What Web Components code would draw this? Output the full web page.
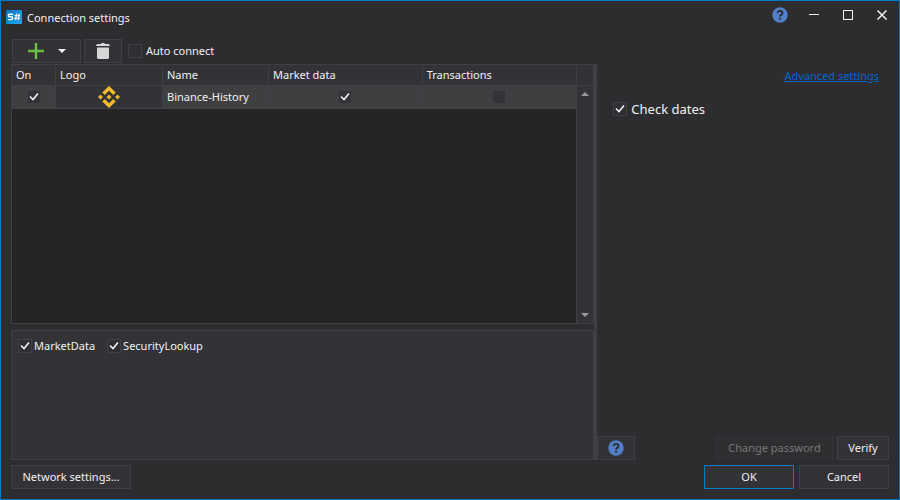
<!DOCTYPE html>
<html lang="en">
<head>
<meta charset="utf-8">
<title>Connection settings</title>
<style>
  :root {
    --bg: #2d2d30;
    --panel: #333337;
    --line: #3f3f46;
    --row: #3f3f41;
    --dark: #252526;
    --accent: #007acc;
    --text: #f1f1f1;
  }
  body {
    margin: 0;
    background: var(--bg);
    color: var(--text);
    font: 11px/16px "Noto Sans", "Open Sans", sans-serif;
  }
</style>
</head>
<body>
<settings-window>
  <title-bar slot="title">Connection settings</title-bar>

  <tool-bar slot="toolbar">
    <ui-button class="add" label="Add connection"><add-icon></add-icon></ui-button>
    <ui-button class="remove" label="Remove connection"><trash-icon></trash-icon></ui-button>
    <check-box large>Auto connect</check-box>
  </tool-bar>

  <connection-table slot="table"></connection-table>

  <message-types slot="messages">
    <check-box checked>MarketData</check-box>
    <check-box checked>SecurityLookup</check-box>
  </message-types>

  <adapter-settings slot="settings">
    <check-box checked large>Check dates</check-box>
  </adapter-settings>

  <dialog-footer slot="footer"></dialog-footer>
</settings-window>

<script>
class SettingsWindow extends HTMLElement {
  constructor() {
    super();
    this.attachShadow({ mode: 'open' }).innerHTML = `
      <style>
        :host {
          box-sizing: border-box;
          display: flex;
          flex-direction: column;
          min-height: 100vh;
          border: 1px solid var(--accent);
        }
        main {
          flex: 1;
          display: grid;
          grid-template-columns: 2fr 3px 1fr;
          grid-template-rows: 25px 1fr;
          padding: 0 10px;
        }
        .left {
          grid-row: 2;
          display: grid;
          grid-template-rows: 2fr 1fr;
          gap: 6px;
        }
        .splitter {
          grid-row: 2;
          background: var(--line);
        }
        .right {
          grid-column: 3;
          grid-row: 1 / 3;
          display: flex;
        }
      </style>
      <slot name="title"></slot>
      <main>
        <slot name="toolbar"></slot>
        <div class="left">
          <slot name="table"></slot>
          <slot name="messages"></slot>
        </div>
        <div class="splitter"></div>
        <div class="right"><slot name="settings"></slot></div>
      </main>
      <slot name="footer"></slot>
    `;
  }
}

class TitleBar extends HTMLElement {
  constructor() {
    super();
    this.attachShadow({ mode: 'open' }).innerHTML = `
      <style>
        :host {
          display: flex;
          align-items: flex-start;
          height: 38px;
          box-sizing: border-box;
          padding-left: 5px;
        }
        .logo { margin: 9px 5px 0 0; }
        h1 {
          flex: 1;
          margin: 0;
          padding-top: 9px;
          font: inherit;
        }
        nav { display: flex; }
        button {
          width: 34px;
          height: 28px;
          padding: 0;
          border: 0;
          background: none;
          color: var(--text);
          display: grid;
          place-items: center;
        }
      </style>
      <svg class="logo" width="16" height="14" viewBox="0 0 16 14">
        <defs>
          <linearGradient id="g" x1="0" y1="0" x2="1" y2="1">
            <stop offset="0" stop-color="#0c6fc4"/>
            <stop offset="1" stop-color="#12b2ea"/>
          </linearGradient>
        </defs>
        <rect width="16" height="14" rx="1" fill="url(#g)"/>
        <g fill="none" stroke="#fff" stroke-width="1.4">
          <path d="M7 4.2H3.4Q2.4 4.2 2.4 5.4T3.4 6.8H5.6Q6.6 6.8 6.6 8T5.6 9.6H2"/>
          <path d="M10.6 3.6L9.6 10M13.2 3.6L12.2 10M8.4 5.6H14.2M8 8.2H13.8" stroke-width="1.1"/>
        </g>
      </svg>
      <h1><slot></slot></h1>
      <nav>
        <button aria-label="Help"><help-icon></help-icon></button>
        <button aria-label="Minimize">
          <svg width="12" height="12"><path d="M1 5.5H11" stroke="currentColor"/></svg>
        </button>
        <button aria-label="Maximize">
          <svg width="12" height="12"><rect x="1.5" y="1.5" width="9" height="9" fill="none" stroke="currentColor"/></svg>
        </button>
        <button aria-label="Close">
          <svg width="12" height="12"><path d="M1.5 1.5L10.5 10.5M10.5 1.5L1.5 10.5" stroke="currentColor" stroke-width="1.5"/></svg>
        </button>
      </nav>
    `;
  }
}

class ToolBar extends HTMLElement {
  constructor() {
    super();
    this.attachShadow({ mode: 'open' }).innerHTML = `
      <style>
        :host {
          display: flex;
          align-items: stretch;
          padding: 0 0 1px 1px;
        }
        ::slotted(.add) { width: 69px; margin-right: 3px; }
        ::slotted(.remove) { width: 38px; margin-right: 6px; }
      </style>
      <slot></slot>
    `;
  }
}

class UiButton extends HTMLElement {
  constructor() {
    super();
    this.attachShadow({ mode: 'open' });
  }

  connectedCallback() {
    const label = this.getAttribute('label');
    const disabled = this.hasAttribute('disabled');
    this.shadowRoot.innerHTML = `
      <style>
        :host { display: flex; height: 24px; }
        button {
          flex: 1;
          display: flex;
          align-items: center;
          justify-content: center;
          padding: 0 10px;
          border: 1px solid var(--line);
          background: var(--panel);
          color: inherit;
          font: inherit;
          white-space: nowrap;
        }
        :host([primary]) button { border-color: var(--accent); }
        button:disabled {
          border-color: #343438;
          background: #2f2f32;
          color: #777;
        }
      </style>
      <button type="button" ${label ? `aria-label="${label}"` : ''} ${disabled ? 'disabled' : ''}><slot></slot></button>
    `;
  }
}

class CheckBox extends HTMLElement {
  constructor() {
    super();
    this.attachShadow({ mode: 'open' });
  }

  connectedCallback() {
    const label = this.getAttribute('label');
    this.shadowRoot.innerHTML = `
      <style>
        :host { display: inline-flex; align-items: center; }
        label { display: flex; align-items: center; gap: 2px; }
        .box { display: grid; }
        .box > * { grid-area: 1 / 1; }
        input {
          appearance: none;
          width: 14px;
          height: 14px;
          margin: 0;
          border: 1px solid var(--line);
          background: #2f2f33;
        }
        :host([bare]) input {
          width: 12px;
          height: 12px;
          border: 0;
          background: var(--panel);
        }
        :host([large]) label { gap: 4px; }
        svg { place-self: center; pointer-events: none; visibility: hidden; }
        input:checked + svg { visibility: visible; }
      </style>
      <label>
        <span class="box">
          <input type="checkbox" ${label ? `aria-label="${label}"` : ''} ${this.hasAttribute('checked') ? 'checked' : ''}>
          <svg width="10" height="10"><path d="M1 4.5L4 7.5L9 1.5" fill="none" stroke="#f1f1f1" stroke-width="1.6"/></svg>
        </span>
        <slot></slot>
      </label>
    `;
  }
}

class ConnectionTable extends HTMLElement {
  constructor() {
    super();
    this.attachShadow({ mode: 'open' }).innerHTML = `
      <style>
        :host {
          display: flex;
          border: 1px solid var(--line);
          background: var(--dark);
        }
        .grid { flex: 1; }
        table {
          width: 100%;
          table-layout: fixed;
          border-spacing: 0;
        }
        .on { width: 44px; }
        .logo { width: 107px; }
        .name { width: 106px; }
        th, td {
          box-sizing: border-box;
          padding: 0 0 0 4px;
          border: solid var(--line);
          border-width: 0 1px 1px 0;
          text-align: left;
          font-weight: normal;
        }
        th { height: 21px; background: var(--panel); }
        td { height: 23px; background: var(--row); }
        th:last-child, td:last-child { border-right: 0; }
        td.check { padding: 0; text-align: center; }
        td.mark { padding: 0; background: var(--panel); }
        check-box, binance-logo { display: flex; justify-content: center; }
      </style>
      <div class="grid">
        <table>
          <colgroup><col class="on"><col class="logo"><col class="name"><col><col></colgroup>
          <thead>
            <tr><th>On</th><th>Logo</th><th>Name</th><th>Market data</th><th>Transactions</th></tr>
          </thead>
          <tbody>
            <tr>
              <td class="check"><check-box bare checked label="On"></check-box></td>
              <td class="mark"><binance-logo></binance-logo></td>
              <td>Binance-History</td>
              <td class="check"><check-box bare checked label="Market data"></check-box></td>
              <td class="check"><check-box bare label="Transactions"></check-box></td>
            </tr>
          </tbody>
        </table>
      </div>
      <scroll-track></scroll-track>
    `;
  }
}

class ScrollTrack extends HTMLElement {
  constructor() {
    super();
    this.attachShadow({ mode: 'open' }).innerHTML = `
      <style>
        :host {
          display: flex;
          flex-direction: column;
          width: 16px;
          border-left: 1px solid var(--line);
          background: var(--panel);
          color: #999;
        }
        .head { height: 20px; border-bottom: 1px solid var(--line); }
        .track { flex: 1; }
        button {
          height: 16px;
          padding: 0;
          border: 0;
          background: none;
          color: inherit;
          display: grid;
          place-items: center;
        }
      </style>
      <div class="head"></div>
      <button type="button" aria-label="Scroll up"><svg width="8" height="4"><path d="M0 4L4 0L8 4Z" fill="currentColor"/></svg></button>
      <div class="track"></div>
      <button type="button" aria-label="Scroll down"><svg width="8" height="4"><path d="M0 0L4 4L8 0Z" fill="currentColor"/></svg></button>
    `;
  }
}

class MessageTypes extends HTMLElement {
  constructor() {
    super();
    this.attachShadow({ mode: 'open' }).innerHTML = `
      <style>
        :host {
          display: flex;
          align-items: flex-start;
          gap: 12px;
          padding: 7px 6px;
          border: 1px solid var(--line);
          background: var(--panel);
        }
      </style>
      <slot></slot>
    `;
  }
}

class AdapterSettings extends HTMLElement {
  constructor() {
    super();
    this.attachShadow({ mode: 'open' }).innerHTML = `
      <style>
        :host {
          flex: 1;
          display: flex;
          flex-direction: column;
        }
        .top {
          padding: 29px 10px 0;
          text-align: right;
        }
        a { color: #0066cc; text-underline-offset: 1px; }
        .fields {
          flex: 1;
          padding: 15px 16px;
          font-size: 13px;
          line-height: 20px;
        }
        .actions { display: flex; }
        .help { width: 38px; margin-right: auto; }
        .change { width: 117px; margin-right: 4px; }
        .verify { width: 52px; }
      </style>
      <div class="top"><a href="#advanced">Advanced settings</a></div>
      <div class="fields"><slot></slot></div>
      <div class="actions">
        <ui-button class="help" label="Help"><help-icon></help-icon></ui-button>
        <ui-button class="change" disabled>Change password</ui-button>
        <ui-button class="verify">Verify</ui-button>
      </div>
    `;
  }
}

class DialogFooter extends HTMLElement {
  constructor() {
    super();
    this.attachShadow({ mode: 'open' }).innerHTML = `
      <style>
        :host {
          display: flex;
          gap: 5px;
          padding: 5px 10px 10px;
        }
        .network { width: 120px; margin-right: auto; }
        .answer { width: 90px; }
      </style>
      <ui-button class="network">Network settings...</ui-button>
      <ui-button class="answer" primary>OK</ui-button>
      <ui-button class="answer">Cancel</ui-button>
    `;
  }
}

class HelpIcon extends HTMLElement {
  constructor() {
    super();
    this.attachShadow({ mode: 'open' }).innerHTML = `
      <style>:host, svg { display: block; }</style>
      <svg width="16" height="16" viewBox="0 0 16 16">
        <circle cx="8" cy="8" r="7.7" fill="#5280c8"/>
        <path d="M5.6 6Q5.8 3.9 8.1 3.9Q10.5 3.9 10.5 5.9Q10.5 7.1 9.2 7.8Q8.1 8.4 8.1 9.6" fill="none" stroke="#2d2d30" stroke-width="1.9"/>
        <rect x="7.1" y="10.7" width="2" height="2" fill="#2d2d30"/>
      </svg>
    `;
  }
}

class AddIcon extends HTMLElement {
  constructor() {
    super();
    this.attachShadow({ mode: 'open' }).innerHTML = `
      <style>:host { display: flex; align-items: center; gap: 14px; }</style>
      <svg width="16" height="16"><path d="M8 0V16M0 8H16" stroke="#6cbf43" stroke-width="2.4"/></svg>
      <svg width="8" height="4"><path d="M0 0H8L4 4Z" fill="#f1f1f1"/></svg>
    `;
  }
}

class TrashIcon extends HTMLElement {
  constructor() {
    super();
    this.attachShadow({ mode: 'open' }).innerHTML = `
      <style>:host, svg { display: block; }</style>
      <svg width="14" height="16" fill="#d6d6d6">
        <path d="M0 3Q0 1 2 1H5Q5 0 6 0H8Q9 0 9 1H12Q14 1 14 3Z"/>
        <path d="M1 4.5H13V14.5Q13 16 11.5 16H2.5Q1 16 1 14.5Z"/>
      </svg>
    `;
  }
}

class BinanceLogo extends HTMLElement {
  constructor() {
    super();
    this.attachShadow({ mode: 'open' }).innerHTML = `
      <style>:host, svg { display: block; }</style>
      <svg width="22" height="22" viewBox="0 0 32 32" fill="#f3ba2f">
        <path d="M9.8 13.1L16 6.9L22.2 13.1L25.8 9.5L16 0L6.2 9.5Z"/>
        <path d="M0 16L3.6 12.4L7.2 16L3.6 19.6Z"/>
        <path d="M9.8 18.9L16 25.1L22.2 18.9L25.8 22.5L16 32L6.2 22.5Z"/>
        <path d="M24.8 16L28.4 12.4L32 16L28.4 19.6Z"/>
        <path d="M12.4 16L16 12.4L19.6 16L16 19.6Z"/>
      </svg>
    `;
  }
}

customElements.define('help-icon', HelpIcon);
customElements.define('add-icon', AddIcon);
customElements.define('trash-icon', TrashIcon);
customElements.define('binance-logo', BinanceLogo);
customElements.define('ui-button', UiButton);
customElements.define('check-box', CheckBox);
customElements.define('scroll-track', ScrollTrack);
customElements.define('title-bar', TitleBar);
customElements.define('tool-bar', ToolBar);
customElements.define('connection-table', ConnectionTable);
customElements.define('message-types', MessageTypes);
customElements.define('adapter-settings', AdapterSettings);
customElements.define('dialog-footer', DialogFooter);
customElements.define('settings-window', SettingsWindow);
</script>
</body>
</html>
